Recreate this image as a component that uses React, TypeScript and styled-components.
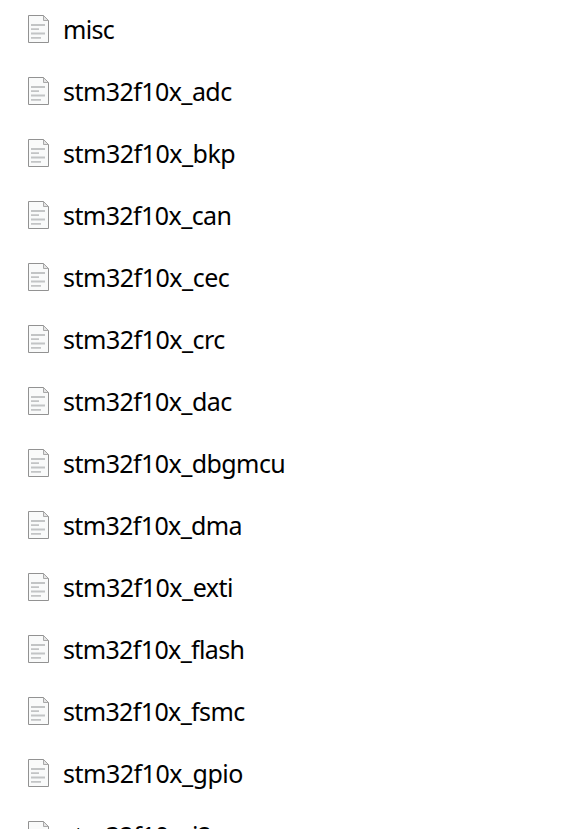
import React from "react";
import styled, { createGlobalStyle } from "styled-components";

const GlobalStyle = createGlobalStyle`
  html, body { margin: 0; background: #fff; height: 829px; overflow: hidden; }
`;
const FileList = styled.ul`
  list-style: none;
  margin: 0;
  padding: 0 0 0 27px;
  height: 829px;
  box-sizing: border-box;
  overflow: hidden;
`;
const FileRow = styled.li`
  display: flex;
  align-items: flex-start;
  height: 62px;
  box-sizing: border-box;
  padding-top: 14px;
`;
const FileIconBox = styled.svg`
  flex: none;
  width: 23px;
  height: 30px;
`;
const FileName = styled.span<{ $tracking: number }>`
  margin: -1px 0 0 13px;
  font: 400 25px/32px "Noto Sans", "Open Sans", sans-serif;
  letter-spacing: ${(p) => p.$tracking}px;
  color: #000;
  white-space: nowrap;
`;

const files: { name: string; tracking: number }[] = [
  { name: "misc", tracking: -0.7 },
  { name: "stm32f10x_adc", tracking: -0.56 },
  { name: "stm32f10x_bkp", tracking: -0.5 },
  { name: "stm32f10x_can", tracking: -0.58 },
  { name: "stm32f10x_cec", tracking: -0.48 },
  { name: "stm32f10x_crc", tracking: -0.5 },
  { name: "stm32f10x_dac", tracking: -0.56 },
  { name: "stm32f10x_dbgmcu", tracking: -0.58 },
  { name: "stm32f10x_dma", tracking: -0.64 },
  { name: "stm32f10x_exti", tracking: -0.48 },
  { name: "stm32f10x_flash", tracking: -0.64 },
  { name: "stm32f10x_fsmc", tracking: -0.64 },
  { name: "stm32f10x_gpio", tracking: -0.5 },
  { name: "stm32f10x_i2c", tracking: -0.56 },
];

const FileIcon = () => (
  <FileIconBox viewBox="0 0 23 30" aria-hidden="true">
    <path d="M1.5 1.5H16.5L21.5 6.5V28.5H1.5Z" fill="#f9fafa" stroke="#929292" />
    <path d="M16.5 1.5V6.5H21.5Z" fill="#e4e4e4" stroke="#a0a0a0" strokeWidth="0.9" />
    <path d="M4 10h14v2H4zM4 14.3h8v1.7H4zM4 18.6h14v1.8H4zM4 23h10v1.7H4z" fill="#c2c4c5" />
  </FileIconBox>
);

export default function App() {
  return (
    <>
      <GlobalStyle />
      <FileList>
        {files.map(({ name, tracking }) => (
          <FileRow key={name}>
            <FileIcon />
            <FileName $tracking={tracking}>{name}</FileName>
          </FileRow>
        ))}
      </FileList>
    </>
  );
}
